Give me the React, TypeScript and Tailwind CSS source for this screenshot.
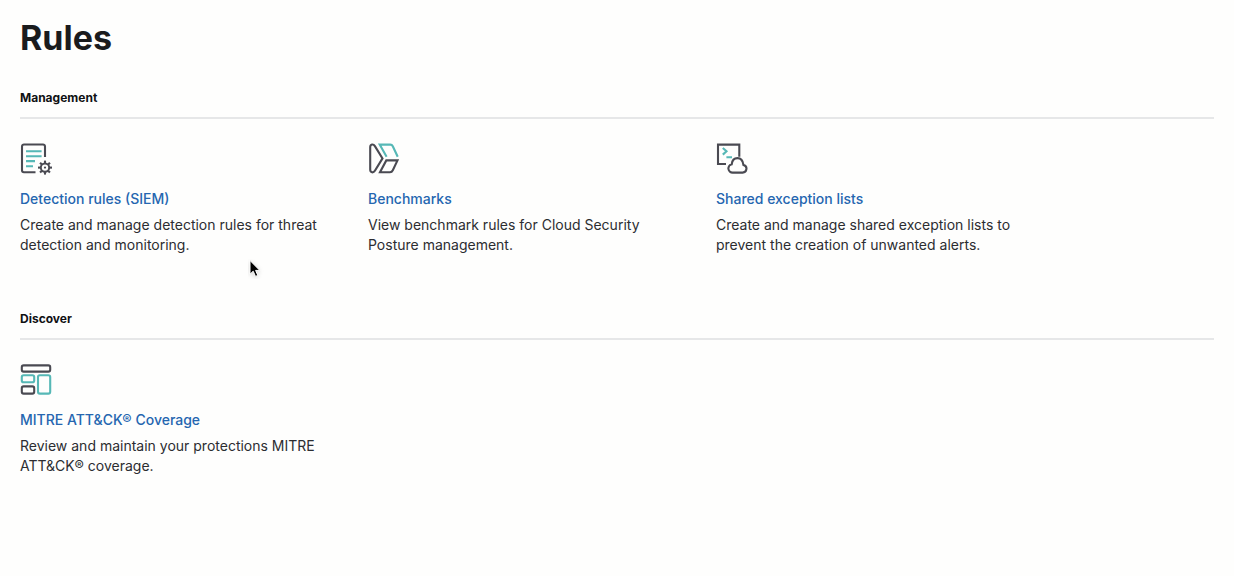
import type { ReactNode } from "react";

const INK = "#4a4a52";
const TEAL = "#56b8b6";

function Glyph({ children }: { children: ReactNode }) {
  return (
    <svg className="size-8" viewBox="0 0 32 32" fill="none" stroke={INK} strokeWidth="2.1" aria-hidden="true">
      {children}
    </svg>
  );
}

function RulesIcon() {
  const teeth = [0, 45, 90, 135, 180, 225, 270, 315];
  return (
    <Glyph>
      <path d="M25 14V3.5a2 2 0 0 0-2-2H4a2 2 0 0 0-2 2v23.8a2 2 0 0 0 2 2h11.5" />
      <path stroke={TEAL} d="M6 8.3h15.6M6 13.2h15.6M6 18.1h9M6 23.2h7" />
      <circle cx="25" cy="24.6" r="4.2" strokeWidth="2" />
      <circle cx="25" cy="24.6" r="1.1" fill={INK} stroke="none" />
      {teeth.map((angle) => (
        <path key={angle} d="M25 20.2v-2.6" transform={`rotate(${angle} 25 24.6)`} />
      ))}
    </Glyph>
  );
}

function BenchmarksIcon() {
  return (
    <Glyph>
      <path d="M2.2 4.2c0-3.3 3.2-3.5 4.7-1.1l7.6 12.3-7.6 12.3c-1.5 2.4-4.7 2.2-4.7-1.1Z" />
      <path stroke={TEAL} d="M18.6 13.8 11.7 1.6h10.6c1.3 0 2 .6 2.5 1.6l4.9 10.6" />
      <path d="M18.3 17.4h11.2l-4.7 9.9c-.6 1.3-1.4 2-2.8 2H12Z" />
    </Glyph>
  );
}

function ExceptionsIcon() {
  return (
    <Glyph>
      <path d="M23.3 13.8V1.6H2V21h8" />
      <path stroke={TEAL} d="m6.8 5 3.7 3.3-3.7 3.3M10.4 14.2H16" />
      <path d="M16.8 29.600h9.600a3.900 3.900 0 0 0 1-7.700c-.5-4.300-2.700-6.800-5.900-6.800s-5.400 2.500-5.800 6.200a4.200 4.200 0 0 0 1.100 8.300Z" />
    </Glyph>
  );
}

function CoverageIcon() {
  return (
    <Glyph>
      <rect x="1.8" y="1.4" width="28.4" height="6.2" rx="1.8" />
      <rect x="1.8" y="11.2" width="12.4" height="7" rx="1.8" stroke={TEAL} />
      <rect x="1.8" y="22.4" width="12.4" height="7.2" rx="1.8" />
      <rect x="18" y="11.2" width="12.2" height="18.4" rx="1.8" stroke={TEAL} />
    </Glyph>
  );
}

type Item = { title: string; description: string; icon: ReactNode };

const management: Item[] = [
  {
    title: "Detection rules (SIEM)",
    description: "Create and manage detection rules for threat detection and monitoring.",
    icon: <RulesIcon />,
  },
  {
    title: "Benchmarks",
    description: "View benchmark rules for Cloud Security Posture management.",
    icon: <BenchmarksIcon />,
  },
  {
    title: "Shared exception lists",
    description: "Create and manage shared exception lists to prevent the creation of unwanted alerts.",
    icon: <ExceptionsIcon />,
  },
];

const discover: Item[] = [
  {
    title: "MITRE ATT&CK® Coverage",
    description: "Review and maintain your protections MITRE ATT&CK® coverage.",
    icon: <CoverageIcon />,
  },
];

function Section({ title, items }: { title: string; items: Item[] }) {
  return (
    <section>
      <h2 className="border-b-2 border-[#e6e7e8] pb-[11px] text-xs leading-4 font-bold text-[#101114]">{title}</h2>
      <ul className="mt-6 grid grid-cols-[repeat(auto-fill,324px)] gap-6">
        {items.map((item) => (
          <li key={item.title}>
            {item.icon}
            <h3 className="mt-3.5 text-sm leading-5 font-medium">
              <a href="#" className="text-[#2566b0] hover:underline">{item.title}</a>
            </h3>
            <p className="mt-1.5 max-w-[304px] text-sm leading-5 text-[#2c2d31]">{item.description}</p>
          </li>
        ))}
      </ul>
    </section>
  );
}

function Pointer() {
  return (
    <svg className="pointer-events-none absolute top-[259px] left-[248px] h-5 w-4" viewBox="0 0 16 20" aria-hidden="true">
      <path
        d="M2 1.5v13.700l3.200-3 2.300 5.200 2.300-1-2.200-5h4.200Z"
        fill="#000"
        stroke="#fff"
        strokeWidth="1"
        className="drop-shadow-sm"
      />
    </svg>
  );
}

export default function App() {
  return (
    <main className="relative min-h-screen bg-[#fefefd] px-5 py-[18px] font-['Inter',sans-serif] text-[#1a1b1d]">
      <h1 className="text-[34px] leading-10 font-bold">Rules</h1>
      <div className="mt-8 flex flex-col gap-14">
        <Section title="Management" items={management} />
        <Section title="Discover" items={discover} />
      </div>
      <Pointer />
    </main>
  );
}
